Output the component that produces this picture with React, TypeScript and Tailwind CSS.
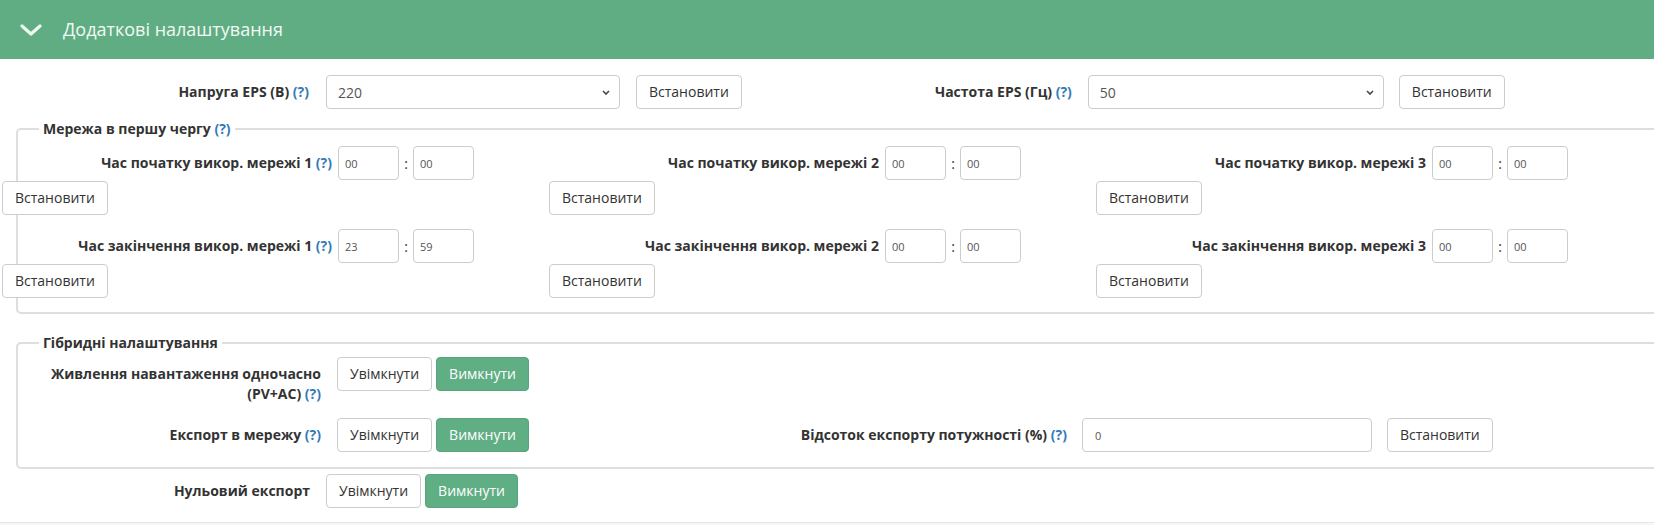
import React from "react";

// small blue help marker used after most labels
const Help = () => <span className="text-[#337ab7]">(?)</span>;

interface BtnProps {
  children: React.ReactNode;
  green?: boolean;
  className?: string;
}

const Btn = ({ children, green, className = "" }: BtnProps) => (
  <button
    type="button"
    className={`h-[34px] px-[12px] rounded-[4px] border text-[14px] leading-[20px] whitespace-nowrap ${
      green
        ? "bg-[#5fae84] border-[#58a57c] text-white"
        : "bg-white border-[#cccccc] text-[#333333]"
    } ${className}`}
  >
    {children}
  </button>
);

const Toggle = () => (
  <div className="flex gap-[4px]">
    <Btn>Увімкнути</Btn>
    <Btn green>Вимкнути</Btn>
  </div>
);

const FakeSelect = ({ value, className = "" }: { value: string; className?: string }) => (
  <div
    className={`h-[34px] flex items-center justify-between px-[11px] border border-[#cccccc] rounded-[4px] bg-white text-[14px] text-[#555555] ${className}`}
  >
    <span>{value}</span>
    <svg width="8" height="5" viewBox="0 0 8 5" className="mr-[-2px]">
      <path d="M1 1l3 3 3-3" fill="none" stroke="#444" strokeWidth="1.6" />
    </svg>
  </div>
);

const TimeInput = ({ value }: { value: string }) => (
  <input
    readOnly
    value={value}
    className="w-[61px] h-[34px] border border-[#cccccc] rounded-[4px] pl-[6px] text-[11px] text-[#555555] bg-white outline-none"
  />
);

const TimeRow = ({ label, h, m }: { label: React.ReactNode; h: string; m: string }) => (
  <div className="flex items-start">
    <div className="w-[330px] text-right font-bold pt-[7px] leading-[20px]">{label}</div>
    <div className="ml-[6px] flex items-center">
      <TimeInput value={h} />
      <span className="w-[14px] text-center text-[14px]">:</span>
      <TimeInput value={m} />
    </div>
  </div>
);

const columns = [
  { n: 1, end: ["23", "59"], help: true },
  { n: 2, end: ["00", "00"], help: false },
  { n: 3, end: ["00", "00"], help: false },
];

export default function App() {
  return (
    <div className="w-[1654px] h-[525px] overflow-hidden bg-white font-['Open_Sans',sans-serif] text-[14px] text-[#333333]">
      {/* panel heading */}
      <div className="h-[59px] flex items-center bg-[#60ad84]">
        <svg width="22" height="14" viewBox="0 0 22 14" className="ml-[20px]">
          <path d="M2 3l9 8 9-8" fill="none" stroke="#eef8f1" strokeWidth="3.2" strokeLinecap="round" strokeLinejoin="round" />
        </svg>
        <span className="ml-[21px] text-[18px] text-[#f2faf4]">Додаткові налаштування</span>
      </div>

      {/* EPS row */}
      <div className="mt-[16px] flex items-start">
        <div className="w-[309px] text-right font-bold pt-[7px] leading-[20px]">
          Напруга EPS (В) <Help />
        </div>
        <FakeSelect value="220" className="ml-[17px] w-[294px]" />
        <Btn className="ml-[16px]">Встановити</Btn>
        <div className="w-[330px] text-right font-bold pt-[7px] leading-[20px]">
          Частота EPS (Гц) <Help />
        </div>
        <FakeSelect value="50" className="ml-[16px] w-[296px]" />
        <Btn className="ml-[15px]">Встановити</Btn>
      </div>

      {/* grid priority */}
      <fieldset className="ml-[16px] mt-[10px] w-[1654px] border-2 border-[#dedede] rounded-[5px] pt-[7px] pb-[14px]">
        <legend className="ml-[21px] px-[4px] font-bold leading-[20px]">
          Мережа в першу чергу <Help />
        </legend>
        <div className="-ml-[16px] grid grid-cols-[547px_547px_547px]">
          {columns.map((c) => (
            <div key={c.n}>
              <TimeRow
                label={
                  <>
                    Час початку викор. мережі {c.n}
                    {c.help && (
                      <>
                        {" "}
                        <Help />
                      </>
                    )}
                  </>
                }
                h="00"
                m="00"
              />
              <Btn className="mt-[1px] text-[14px]">Встановити</Btn>
              <div className="mt-[14px]">
                <TimeRow
                  label={
                    <>
                      Час закінчення викор. мережі {c.n}
                      {c.help && (
                        <>
                          {" "}
                          <Help />
                        </>
                      )}
                    </>
                  }
                  h={c.end[0]}
                  m={c.end[1]}
                />
              </div>
              <Btn className="mt-[1px]">Встановити</Btn>
            </div>
          ))}
        </div>
      </fieldset>

      {/* hybrid settings */}
      <fieldset className="ml-[16px] mt-[19px] w-[1654px] border-2 border-[#dedede] rounded-[5px] pt-[4px] pb-[15px]">
        <legend className="ml-[21px] px-[4px] font-bold leading-[20px]">Гібридні налаштування</legend>
        <div className="flex items-start">
          <div className="w-[303px] text-right font-bold pt-[7px] leading-[20px]">
            Живлення навантаження одночасно
            <br />
            (PV+AC) <Help />
          </div>
          <div className="ml-[16px]">
            <Toggle />
          </div>
        </div>
        <div className="mt-[14px] flex items-start">
          <div className="w-[303px] text-right font-bold pt-[7px] leading-[20px]">
            Експорт в мережу <Help />
          </div>
          <div className="ml-[16px]">
            <Toggle />
          </div>
          <div className="w-[538px] text-right font-bold pt-[7px] leading-[20px]">
            Відсоток експорту потужності (%) <Help />
          </div>
          <input
            readOnly
            value="0"
            className="ml-[15px] w-[290px] h-[34px] border border-[#cccccc] rounded-[4px] pl-[12px] text-[11px] text-[#555555] outline-none"
          />
          <Btn className="ml-[15px]">Встановити</Btn>
        </div>
      </fieldset>

      {/* zero export */}
      <div className="mt-[5px] flex items-start">
        <div className="w-[310px] text-right font-bold pt-[7px] leading-[20px]">Нульовий експорт</div>
        <div className="ml-[16px]">
          <Toggle />
        </div>
      </div>

      <div className="mt-[14px] h-[20px] border-t border-[#e6e6e6] bg-[#f7f7f7]" />
    </div>
  );
}
